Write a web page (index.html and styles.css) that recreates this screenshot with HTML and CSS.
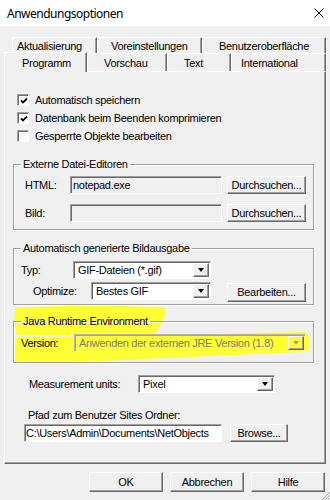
FILE: index.html
```html
<!DOCTYPE html>
<html lang="de">
<head>
<meta charset="UTF-8">
<meta name="viewport" content="width=device-width, initial-scale=1.0">
<title>Anwendungsoptionen</title>
<link rel="stylesheet" href="styles.css">
</head>
<body>
<div class="window">
    <!-- marker strokes, painted under the dialog text -->
    <svg class="marker" width="330" height="500" viewBox="0 0 330 500">
        <path d="M16 308 C60 305 120 306 162 307 Q168 309 165 316 C161 322 159 330 155 334 C110 335 60 335 17 335 Q12 321 16 308 Z" fill="#ffff33"/>
        <path d="M15 338 C100 336 220 333 306 332 Q313 342 307 352 C220 355 120 361 17 364 Q11 350 15 338 Z" fill="#ffff33"/>
    </svg>

    <div class="titlebar">
        <span class="title">Anwendungsoptionen</span>
        <svg class="close" width="10" height="10" viewBox="0 0 10 10"><path d="M0.5 0.5L9.5 9.5M9.5 0.5L0.5 9.5" stroke="#000" stroke-width="1"/></svg>
    </div>

    <div class="tabs">
        <div class="tab-row back">
            <span class="tab tab-update">Aktualisierung</span>
            <span class="tab tab-presets">Voreinstellungen</span>
            <span class="tab tab-ui">Benutzeroberfläche</span>
        </div>
        <div class="tab-row front">
            <span class="tab tab-program active">Programm</span>
            <span class="tab tab-preview">Vorschau</span>
            <span class="tab tab-text">Text</span>
            <span class="tab tab-intl">International</span>
        </div>
    </div>

    <div class="panel">
        <div class="check-row">
            <span class="checkbox checked"><svg width="8" height="8" viewBox="0 0 8 8"><path d="M1 3.5L3 5.5L7 1.5" fill="none" stroke="#000" stroke-width="1.8"/></svg></span>
            <span>Automatisch speichern</span>
        </div>
        <div class="check-row">
            <span class="checkbox checked"><svg width="8" height="8" viewBox="0 0 8 8"><path d="M1 3.5L3 5.5L7 1.5" fill="none" stroke="#000" stroke-width="1.8"/></svg></span>
            <span>Datenbank beim Beenden komprimieren</span>
        </div>
        <div class="check-row">
            <span class="checkbox"></span>
            <span>Gesperrte Objekte bearbeiten</span>
        </div>

        <fieldset class="group group-editors">
            <legend>Externe Datei-Editoren</legend>
            <div class="group-body">
                <div class="field-row">
                    <span class="label label-editor">HTML:</span>
                    <span class="input readonly input-editor">notepad.exe</span>
                    <span class="btn btn-browse">Durchsuchen...</span>
                </div>
                <div class="field-row">
                    <span class="label label-editor">Bild:</span>
                    <span class="input readonly input-editor"></span>
                    <span class="btn btn-browse">Durchsuchen...</span>
                </div>
            </div>
        </fieldset>

        <fieldset class="group group-images">
            <legend>Automatisch generierte Bildausgabe</legend>
            <div class="group-body">
                <div class="field-row">
                    <span class="label label-type">Typ:</span>
                    <span class="combo combo-type"><span class="combo-value">GIF-Dateien (*.gif)</span><span class="combo-btn"></span></span>
                </div>
                <div class="field-row optimize-row">
                    <span class="label label-optimize">Optimize:</span>
                    <span class="combo combo-optimize"><span class="combo-value">Bestes GIF</span><span class="combo-btn"></span></span>
                    <span class="btn btn-edit">Bearbeiten...</span>
                </div>
            </div>
        </fieldset>

        <fieldset class="group group-java">
            <legend>Java Runtime Environment</legend>
            <div class="group-body">
                <div class="field-row">
                    <span class="label label-version">Version:</span>
                    <span class="combo disabled combo-version"><span class="combo-value">Anwenden der externen JRE Version (1.8)</span><span class="combo-btn"></span></span>
                </div>
            </div>
        </fieldset>

        <div class="field-row units-row">
            <span class="label label-units">Measurement units:</span>
            <span class="combo combo-units"><span class="combo-value">Pixel</span><span class="combo-btn"></span></span>
        </div>

        <div class="path-label">Pfad zum Benutzer Sites Ordner:</div>
        <div class="field-row path-row">
            <span class="input input-path">C:\Users\Admin\Documents\NetObjects</span>
            <span class="btn btn-small">Browse...</span>
        </div>
    </div>

    <div class="actions">
        <span class="btn btn-action">OK</span>
        <span class="btn btn-action">Abbrechen</span>
        <span class="btn btn-action">Hilfe</span>
    </div>

    <svg class="grip" width="9" height="9" viewBox="0 0 9 9">
        <path d="M9 1L1 9M9 4L4 9M9 7L7 9" stroke="#a0a0a0" stroke-width="1"/>
    </svg>
</div>
</body>
</html>
```

FILE: styles.css
```css
body {
    margin: 0;
    font-family: "Liberation Sans", Arial, sans-serif;
    font-size: 11px;
    letter-spacing: -0.3px;
    color: #000;
}

.window {
    position: relative;
    z-index: 0;
    width: 330px;
    height: 500px;
    background: #f0f0f0;
    overflow: hidden;
}

.titlebar {
    height: 26px;
    background: #fff;
    display: flex;
    align-items: center;
    justify-content: space-between;
    padding: 0 6px 0 7px;
}

.title {
    font-family: "Noto Sans", sans-serif;
    font-size: 12px;
    letter-spacing: -0.5px;
}

/* tabs */
.tabs {
    margin-top: 11px;
}

.tab-row {
    display: flex;
}

.tab-row.back {
    height: 16px;
    padding-left: 12px;
}

.tab-row.front {
    height: 18px;
    padding-left: 4px;
    align-items: flex-end;
}

.tab {
    box-sizing: border-box;
    height: 100%;
    display: flex;
    align-items: center;
    border-left: 1px solid #fff;
    border-top: 1px solid #fff;
    border-right: 1px solid #696969;
    box-shadow: inset -1px 0 #a0a0a0;
    white-space: nowrap;
}

.tab.active {
    position: relative;
    z-index: 2;
    height: 20px;
    margin-bottom: -1px;
    background: #f0f0f0;
}

.tab-update  { width: 85px;  padding-left: 4px; }
.tab-presets { width: 105px; padding-left: 13px; }
.tab-ui      { width: 124px; padding-left: 16px; }
.tab-program { width: 83px;  padding-left: 17px; }
.tab-preview { width: 80px;  padding-left: 16px; }
.tab-text    { width: 64px;  padding-left: 16px; }
.tab-intl    { width: 95px;  padding-left: 9px; }

/* tab page */
.panel {
    margin-left: 4px;
    width: 322px;
    height: 393px;
    box-sizing: border-box;
    border: 1px solid;
    border-color: #fff #696969 #696969 #fff;
    box-shadow: inset -1px -1px #a0a0a0;
    padding-top: 19px;
}

.check-row {
    display: flex;
    align-items: center;
    height: 18px;
    padding-left: 12px;
    gap: 6px;
}

.checkbox {
    width: 12px;
    height: 12px;
    box-sizing: border-box;
    background: #fff;
    border: 1px solid;
    border-color: #a0a0a0 #fff #fff #a0a0a0;
    box-shadow: inset 1px 1px #696969;
    display: flex;
    align-items: center;
    justify-content: center;
    padding: 1px 0 0 1px;
}

/* group boxes */
.group {
    margin: 0 0 0 8px;
    width: 301px;
    box-sizing: border-box;
    min-width: 0;
    padding: 0;
    border: 1px solid #a0a0a0;
    box-shadow: inset 1px 1px #fff, 1px 1px #fff;
}

.group legend {
    margin-left: 7px;
    padding: 0 2px;
    line-height: 13px;
}

.group-editors { margin-top: 13px; }
.group-images  { margin-top: 12px; }
.group-java    { margin-top: 10px; }

.group-editors .group-body {
    padding: 5px 0 7px 11px;
    display: flex;
    flex-direction: column;
    gap: 10px;
}

.group-images .group-body {
    padding: 6px 0 4px 7px;
    display: flex;
    flex-direction: column;
    gap: 3px;
}

.group-java .group-body {
    padding: 6px 0 10px 7px;
}

.field-row {
    display: flex;
    align-items: center;
    height: 18px;
}

.label-editor   { width: 45px; }
.label-type     { width: 52px; }
.label-optimize { width: 58px; }
.label-version  { width: 53px; }
.label-units    { width: 109px; }

.optimize-row {
    padding-left: 12px;
}

/* sunken fields */
.input,
.combo {
    box-sizing: border-box;
    height: 18px;
    display: flex;
    align-items: center;
    background: #fff;
    border: 1px solid;
    border-color: #a0a0a0 #fff #fff #a0a0a0;
    box-shadow: inset 1px 1px #696969;
    overflow: hidden;
    white-space: nowrap;
}

.input {
    padding-left: 2px;
}

.input.readonly {
    background: #f0f0f0;
}

.input-editor { width: 152px; margin-right: 5px; }
.input-path   { width: 198px; margin-right: 8px; padding-left: 1px; }

.combo {
    padding: 1px;
}

.combo-value {
    flex: 1;
    padding-left: 3px;
    overflow: hidden;
}

.combo-btn {
    width: 16px;
    height: 14px;
    box-sizing: border-box;
    background: #f0f0f0;
    border: 1px solid;
    border-color: #fff #696969 #696969 #fff;
    box-shadow: inset -1px -1px #a0a0a0;
    display: flex;
    align-items: center;
    justify-content: center;
}

.combo-btn::after {
    content: "";
    border-top: 4px solid #000;
    border-left: 3.5px solid transparent;
    border-right: 3.5px solid transparent;
}

.combo.disabled {
    background: transparent;
    color: #7a7a7a;
    border-color: #b4b4b4 #fff #fff #b4b4b4;
    box-shadow: inset 1px 1px #a0a0a0;
}

.combo.disabled .combo-btn {
    background: transparent;
}

.combo.disabled .combo-btn::after {
    border-top-color: #a0a0a0;
}

.combo-type     { width: 138px; }
.combo-optimize { width: 120px; }
.combo-version  { width: 232px; }
.combo-units    { width: 137px; }

/* raised buttons */
.btn {
    box-sizing: border-box;
    height: 18px;
    display: flex;
    align-items: center;
    justify-content: center;
    background: #f0f0f0;
    border: 1px solid;
    border-color: #fff #696969 #696969 #fff;
    box-shadow: inset -1px -1px #a0a0a0;
    white-space: nowrap;
}

.btn-browse { width: 79px; }
.btn-edit   { width: 79px; margin-left: 16px; height: 19px; margin-top: 2px; }
.btn-small  { width: 58px; }

.units-row {
    margin-top: 12px;
    padding-left: 24px;
}

.path-label {
    margin-top: 16px;
    padding-left: 23px;
    line-height: 13px;
}

.path-row {
    margin-top: 2px;
    padding-left: 19px;
}

/* dialog buttons */
.actions {
    display: flex;
    justify-content: flex-end;
    gap: 7px;
    margin-top: 8px;
    padding-right: 5px;
}

.btn-action {
    width: 74px;
    height: 20px;
}

.marker {
    position: absolute;
    z-index: -1;
    top: 0;
    left: 0;
    pointer-events: none;
}

.grip {
    position: absolute;
    right: 0;
    bottom: 0;
}
```
